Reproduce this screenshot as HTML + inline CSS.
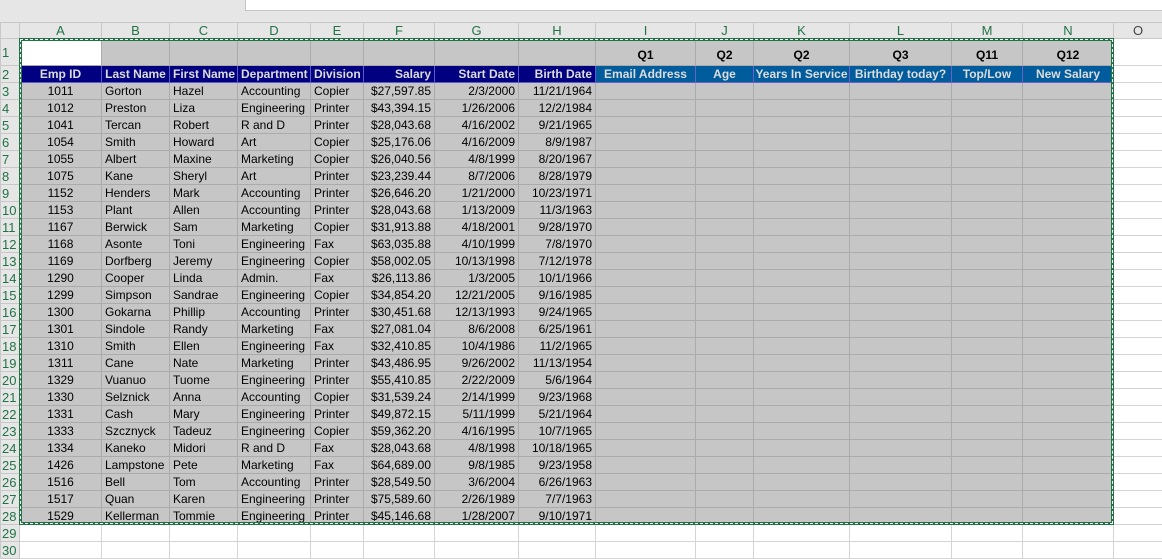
<!DOCTYPE html>
<html><head><meta charset="utf-8"><style>
*{margin:0;padding:0;box-sizing:border-box}
body{width:1162px;height:546px;overflow:hidden;background:#fff;font-family:"Liberation Sans",Arial,sans-serif;font-size:12px;position:relative}
#top{position:absolute;left:0;top:0;width:1162px;height:22px;background:#e6e6e6}
#topbox{position:absolute;left:245px;top:0;width:917px;height:11px;background:#fff;border-left:1px solid #c6c6c6;border-bottom:1px solid #c6c6c6}
table{position:absolute;left:0;top:22px;width:1162px;border-collapse:collapse;table-layout:fixed}
td{border:1px solid #ababab;height:17px;padding:0 3px;white-space:nowrap;overflow:hidden;line-height:15px;background:#c6c6c6;color:#000}
tr.ch td{background:#e6e6e6;height:16px;text-align:center;color:#217346;font-size:13px;border-color:#c8c8c8;line-height:14px}
td.rh{background:#e6e6e6;color:#217346;text-align:left;padding:0 1px;font-size:13px;border-color:#c8c8c8}
tr.r1 td{height:27px;vertical-align:bottom;font-weight:bold;text-align:center;padding-bottom:2px}
tr.r2 td{background:#000080;color:#dcdcdc;font-weight:bold;text-align:center;border-color:#5a5ac8}
tr.r2 td.b{background:#005c9c;border-color:#6b5fc8}
tr td.rh{background:#e6e6e6;color:#217346;font-weight:normal;text-align:left;border-color:#c8c8c8;vertical-align:middle;padding:0 1px}
td.c{text-align:center}td.r{text-align:right}
tr td.w{background:#fff;border-color:#d4d4d4}
td.g{color:#555}
#sel{position:absolute;left:19px;top:38px;width:1095px;height:487px;border:3px solid #217346}
#sel2{position:absolute;left:20px;top:39px;width:1093px;height:485px;border:1px dashed #fff}
</style></head><body>
<div id="top"></div><div id="topbox"></div>
<table>
<colgroup><col style="width:19px"><col style="width:82px"><col style="width:68px"><col style="width:68px"><col style="width:73px"><col style="width:53px"><col style="width:71px"><col style="width:84px"><col style="width:77px"><col style="width:100px"><col style="width:58px"><col style="width:96px"><col style="width:102px"><col style="width:71px"><col style="width:91px"><col style="width:49px"></colgroup>
<tr class="ch"><td style="background:#e6e6e6"></td><td>A</td><td>B</td><td>C</td><td>D</td><td>E</td><td>F</td><td>G</td><td>H</td><td>I</td><td>J</td><td>K</td><td>L</td><td>M</td><td>N</td><td style="color:#444">O</td></tr>
<tr class="r1"><td class="rh">1</td><td style="background:#fff"></td><td></td><td></td><td></td><td></td><td></td><td></td><td></td><td>Q1</td><td>Q2</td><td>Q2</td><td>Q3</td><td>Q11</td><td>Q12</td><td class="w"></td></tr>
<tr class="r2"><td class="rh">2</td><td>Emp ID</td><td>Last Name</td><td>First Name</td><td>Department</td><td>Division</td><td style="text-align:right">Salary</td><td style="text-align:right">Start Date</td><td style="text-align:right">Birth Date</td><td class="b">Email Address</td><td class="b">Age</td><td class="b" style="padding:0">Years In Service</td><td class="b">Birthday today?</td><td class="b">Top/Low</td><td class="b">New Salary</td><td class="w"></td></tr>
<tr><td class="rh">3</td><td class="c">1011</td><td>Gorton</td><td>Hazel</td><td>Accounting</td><td>Copier</td><td class="r">$27,597.85</td><td class="r">2/3/2000</td><td class="r">11/21/1964</td><td></td><td></td><td></td><td></td><td></td><td></td><td class="w"></td></tr>
<tr><td class="rh">4</td><td class="c">1012</td><td>Preston</td><td>Liza</td><td>Engineering</td><td>Printer</td><td class="r">$43,394.15</td><td class="r">1/26/2006</td><td class="r">12/2/1984</td><td></td><td></td><td></td><td></td><td></td><td></td><td class="w"></td></tr>
<tr><td class="rh">5</td><td class="c">1041</td><td>Tercan</td><td>Robert</td><td>R and D</td><td>Printer</td><td class="r">$28,043.68</td><td class="r">4/16/2002</td><td class="r">9/21/1965</td><td></td><td></td><td></td><td></td><td></td><td></td><td class="w"></td></tr>
<tr><td class="rh">6</td><td class="c">1054</td><td>Smith</td><td>Howard</td><td>Art</td><td>Copier</td><td class="r">$25,176.06</td><td class="r">4/16/2009</td><td class="r">8/9/1987</td><td></td><td></td><td></td><td></td><td></td><td></td><td class="w"></td></tr>
<tr><td class="rh">7</td><td class="c">1055</td><td>Albert</td><td>Maxine</td><td>Marketing</td><td>Copier</td><td class="r">$26,040.56</td><td class="r">4/8/1999</td><td class="r">8/20/1967</td><td></td><td></td><td></td><td></td><td></td><td></td><td class="w"></td></tr>
<tr><td class="rh">8</td><td class="c">1075</td><td>Kane</td><td>Sheryl</td><td>Art</td><td>Printer</td><td class="r">$23,239.44</td><td class="r">8/7/2006</td><td class="r">8/28/1979</td><td></td><td></td><td></td><td></td><td></td><td></td><td class="w"></td></tr>
<tr><td class="rh">9</td><td class="c">1152</td><td>Henders</td><td>Mark</td><td>Accounting</td><td>Printer</td><td class="r">$26,646.20</td><td class="r">1/21/2000</td><td class="r">10/23/1971</td><td></td><td></td><td></td><td></td><td></td><td></td><td class="w"></td></tr>
<tr><td class="rh">10</td><td class="c">1153</td><td>Plant</td><td>Allen</td><td>Accounting</td><td>Printer</td><td class="r">$28,043.68</td><td class="r">1/13/2009</td><td class="r">11/3/1963</td><td></td><td></td><td></td><td></td><td></td><td></td><td class="w"></td></tr>
<tr><td class="rh">11</td><td class="c">1167</td><td>Berwick</td><td>Sam</td><td>Marketing</td><td>Copier</td><td class="r">$31,913.88</td><td class="r">4/18/2001</td><td class="r">9/28/1970</td><td></td><td></td><td></td><td></td><td></td><td></td><td class="w"></td></tr>
<tr><td class="rh">12</td><td class="c">1168</td><td>Asonte</td><td>Toni</td><td>Engineering</td><td>Fax</td><td class="r">$63,035.88</td><td class="r">4/10/1999</td><td class="r">7/8/1970</td><td></td><td></td><td></td><td></td><td></td><td></td><td class="w"></td></tr>
<tr><td class="rh">13</td><td class="c">1169</td><td>Dorfberg</td><td>Jeremy</td><td>Engineering</td><td>Copier</td><td class="r">$58,002.05</td><td class="r">10/13/1998</td><td class="r">7/12/1978</td><td></td><td></td><td></td><td></td><td></td><td></td><td class="w"></td></tr>
<tr><td class="rh">14</td><td class="c">1290</td><td>Cooper</td><td>Linda</td><td>Admin.</td><td>Fax</td><td class="r">$26,113.86</td><td class="r">1/3/2005</td><td class="r">10/1/1966</td><td></td><td></td><td></td><td></td><td></td><td></td><td class="w"></td></tr>
<tr><td class="rh">15</td><td class="c">1299</td><td>Simpson</td><td>Sandrae</td><td>Engineering</td><td>Copier</td><td class="r">$34,854.20</td><td class="r">12/21/2005</td><td class="r">9/16/1985</td><td></td><td></td><td></td><td></td><td></td><td></td><td class="w"></td></tr>
<tr><td class="rh">16</td><td class="c">1300</td><td>Gokarna</td><td>Phillip</td><td>Accounting</td><td>Printer</td><td class="r">$30,451.68</td><td class="r">12/13/1993</td><td class="r">9/24/1965</td><td></td><td></td><td></td><td></td><td></td><td></td><td class="w"></td></tr>
<tr><td class="rh">17</td><td class="c">1301</td><td>Sindole</td><td>Randy</td><td>Marketing</td><td>Fax</td><td class="r">$27,081.04</td><td class="r">8/6/2008</td><td class="r">6/25/1961</td><td></td><td></td><td></td><td></td><td></td><td></td><td class="w"></td></tr>
<tr><td class="rh">18</td><td class="c">1310</td><td>Smith</td><td>Ellen</td><td>Engineering</td><td>Fax</td><td class="r">$32,410.85</td><td class="r">10/4/1986</td><td class="r">11/2/1965</td><td></td><td></td><td></td><td></td><td></td><td></td><td class="w"></td></tr>
<tr><td class="rh">19</td><td class="c">1311</td><td>Cane</td><td>Nate</td><td>Marketing</td><td>Printer</td><td class="r">$43,486.95</td><td class="r">9/26/2002</td><td class="r">11/13/1954</td><td></td><td></td><td></td><td></td><td></td><td></td><td class="w"></td></tr>
<tr><td class="rh">20</td><td class="c">1329</td><td>Vuanuo</td><td>Tuome</td><td>Engineering</td><td>Printer</td><td class="r">$55,410.85</td><td class="r">2/22/2009</td><td class="r">5/6/1964</td><td></td><td></td><td></td><td></td><td></td><td></td><td class="w"></td></tr>
<tr><td class="rh">21</td><td class="c">1330</td><td>Selznick</td><td>Anna</td><td>Accounting</td><td>Copier</td><td class="r">$31,539.24</td><td class="r">2/14/1999</td><td class="r">9/23/1968</td><td></td><td></td><td></td><td></td><td></td><td></td><td class="w"></td></tr>
<tr><td class="rh">22</td><td class="c">1331</td><td>Cash</td><td>Mary</td><td>Engineering</td><td>Printer</td><td class="r">$49,872.15</td><td class="r">5/11/1999</td><td class="r">5/21/1964</td><td></td><td></td><td></td><td></td><td></td><td></td><td class="w"></td></tr>
<tr><td class="rh">23</td><td class="c">1333</td><td>Szcznyck</td><td>Tadeuz</td><td>Engineering</td><td>Copier</td><td class="r">$59,362.20</td><td class="r">4/16/1995</td><td class="r">10/7/1965</td><td></td><td></td><td></td><td></td><td></td><td></td><td class="w"></td></tr>
<tr><td class="rh">24</td><td class="c">1334</td><td>Kaneko</td><td>Midori</td><td>R and D</td><td>Fax</td><td class="r">$28,043.68</td><td class="r">4/8/1998</td><td class="r">10/18/1965</td><td></td><td></td><td></td><td></td><td></td><td></td><td class="w"></td></tr>
<tr><td class="rh">25</td><td class="c">1426</td><td>Lampstone</td><td>Pete</td><td>Marketing</td><td>Fax</td><td class="r">$64,689.00</td><td class="r">9/8/1985</td><td class="r">9/23/1958</td><td></td><td></td><td></td><td></td><td></td><td></td><td class="w"></td></tr>
<tr><td class="rh">26</td><td class="c">1516</td><td>Bell</td><td>Tom</td><td>Accounting</td><td>Printer</td><td class="r">$28,549.50</td><td class="r">3/6/2004</td><td class="r">6/26/1963</td><td></td><td></td><td></td><td></td><td></td><td></td><td class="w"></td></tr>
<tr><td class="rh">27</td><td class="c">1517</td><td>Quan</td><td>Karen</td><td>Engineering</td><td>Printer</td><td class="r">$75,589.60</td><td class="r">2/26/1989</td><td class="r">7/7/1963</td><td></td><td></td><td></td><td></td><td></td><td></td><td class="w"></td></tr>
<tr><td class="rh">28</td><td class="c">1529</td><td>Kellerman</td><td>Tommie</td><td>Engineering</td><td>Printer</td><td class="r">$45,146.68</td><td class="r">1/28/2007</td><td class="r">9/10/1971</td><td></td><td></td><td></td><td></td><td></td><td></td><td class="w"></td></tr>
<tr><td class="rh g">29</td><td class="w"></td><td class="w"></td><td class="w"></td><td class="w"></td><td class="w"></td><td class="w"></td><td class="w"></td><td class="w"></td><td class="w"></td><td class="w"></td><td class="w"></td><td class="w"></td><td class="w"></td><td class="w"></td><td class="w"></td></tr>
<tr><td class="rh g">30</td><td class="w"></td><td class="w"></td><td class="w"></td><td class="w"></td><td class="w"></td><td class="w"></td><td class="w"></td><td class="w"></td><td class="w"></td><td class="w"></td><td class="w"></td><td class="w"></td><td class="w"></td><td class="w"></td><td class="w"></td></tr>
</table>
<div id="sel"></div><div id="sel2"></div>
</body></html>
